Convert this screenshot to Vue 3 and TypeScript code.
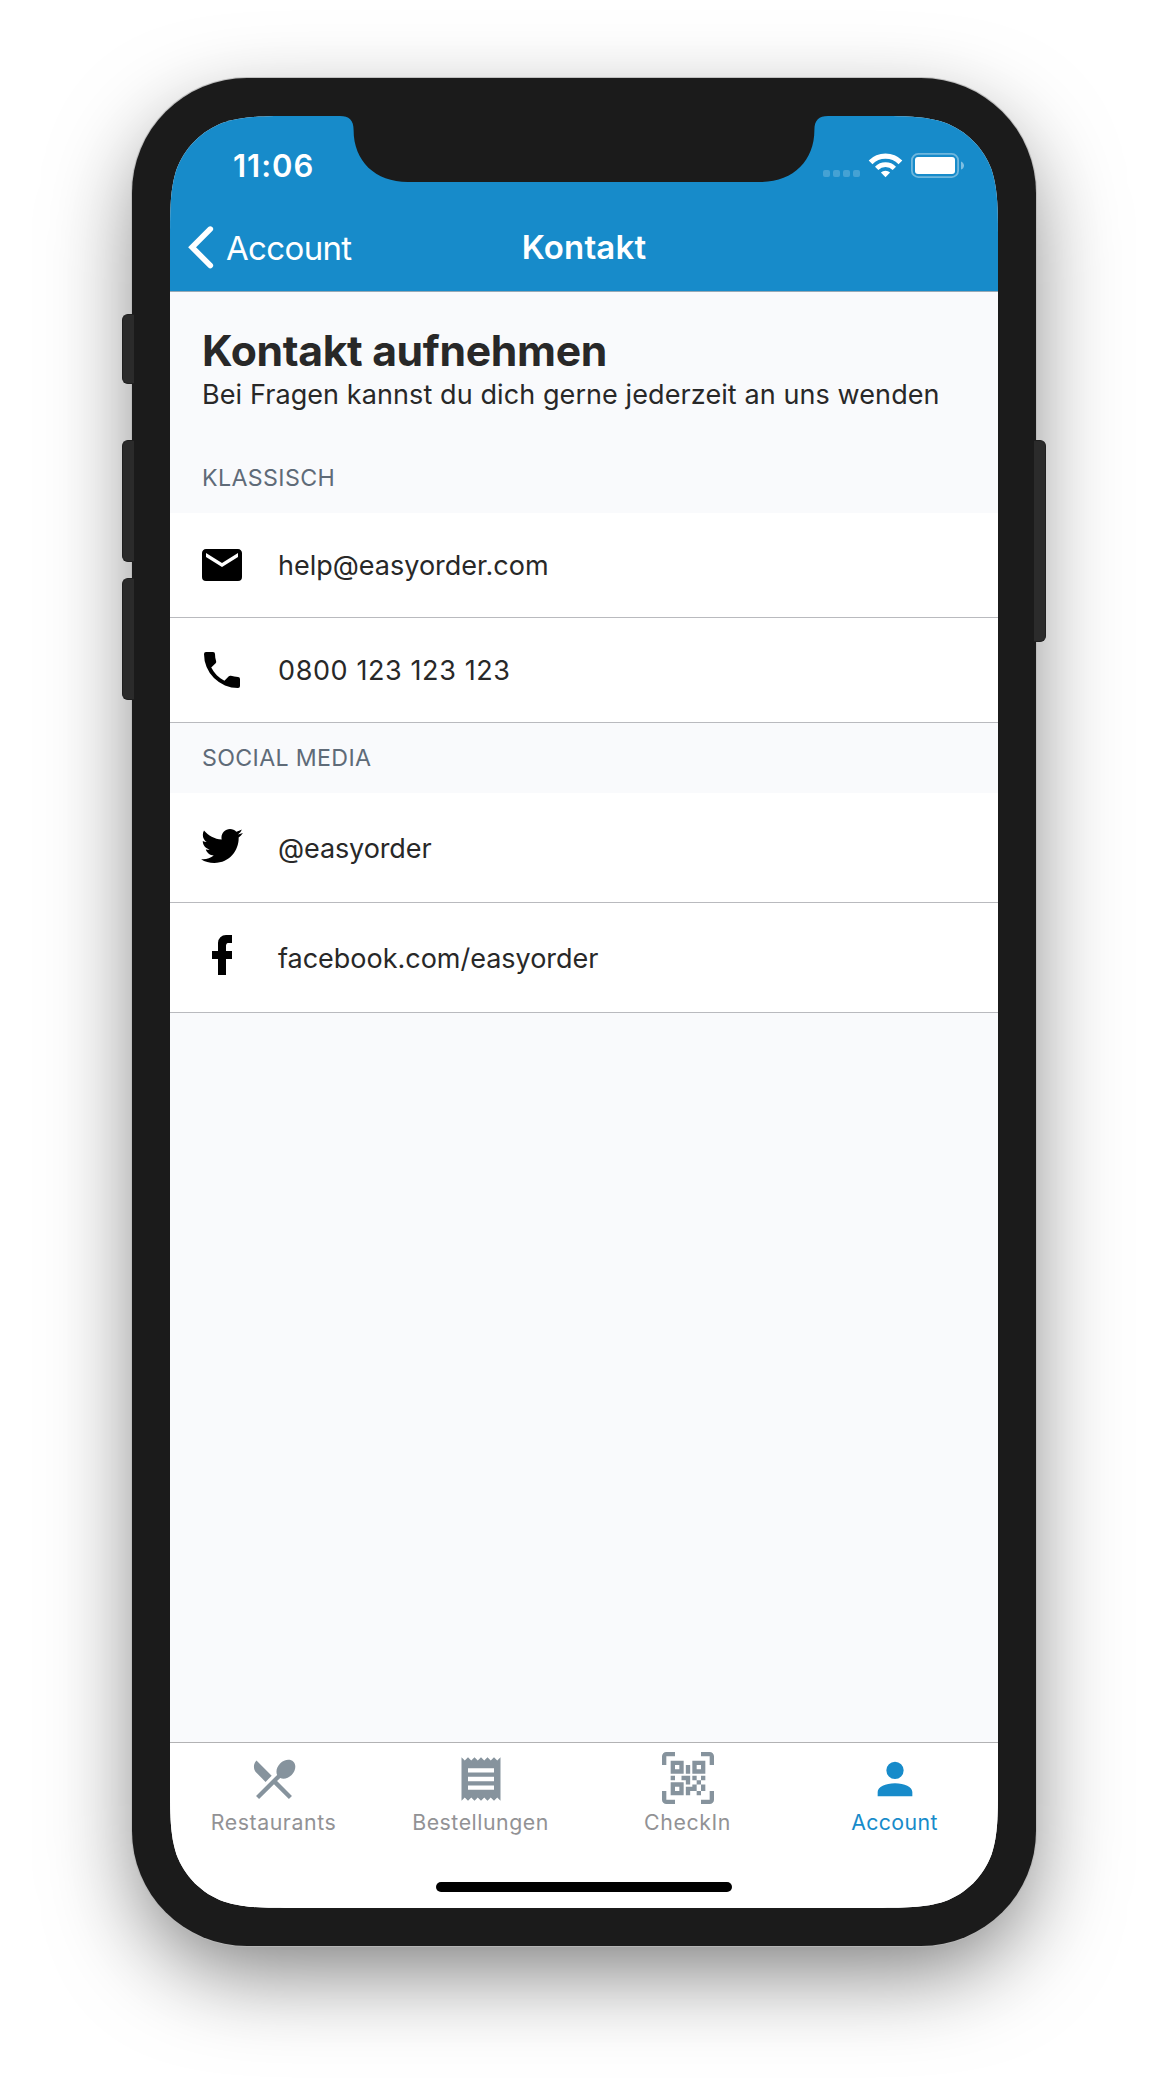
<script setup lang="ts">
interface ContactRow {
  text: string
  path: string
  spacing: string
}

interface ContactSection {
  title: string
  kind: 'classic' | 'social'
  spacing: string
  rows: ContactRow[]
}

interface Tab {
  label: string
  path: string
  spacing: string
  scan?: boolean
  active?: boolean
}

const sections: ContactSection[] = [
  {
    title: 'KLASSISCH',
    kind: 'classic',
    spacing: '0.38px',
    rows: [
      {
        text: 'help@easyorder.com',
        spacing: '0',
        path: 'M20,8L12,13L4,8V6L12,11L20,6M20,4H4C2.89,4 2,4.89 2,6V18A2,2 0 0,0 4,20H20A2,2 0 0,0 22,18V6C22,4.89 21.1,4 20,4Z',
      },
      {
        text: '0800 123 123 123',
        spacing: '0.6px',
        path: 'M6.62,10.79C8.06,13.62 10.38,15.94 13.21,17.38L15.41,15.18C15.69,14.9 16.08,14.82 16.43,14.93C17.55,15.3 18.75,15.5 20,15.5A1,1 0 0,1 21,16.5V20A1,1 0 0,1 20,21A17,17 0 0,1 3,4A1,1 0 0,1 4,3H7.5A1,1 0 0,1 8.5,4C8.5,5.25 8.7,6.45 9.07,7.57C9.18,7.92 9.1,8.31 8.82,8.59L6.62,10.79Z',
      },
    ],
  },
  {
    title: 'SOCIAL MEDIA',
    kind: 'social',
    spacing: '0.34px',
    rows: [
      {
        text: '@easyorder',
        spacing: '-0.1px',
        path: 'M22.46,6C21.69,6.35 20.86,6.58 20,6.69C20.88,6.16 21.56,5.32 21.88,4.31C21.05,4.81 20.13,5.16 19.16,5.36C18.37,4.5 17.26,4 16,4C13.65,4 11.73,5.92 11.73,8.29C11.73,8.63 11.77,8.96 11.84,9.27C8.28,9.09 5.11,7.38 3,4.79C2.63,5.42 2.42,6.16 2.42,6.94C2.42,8.43 3.17,9.75 4.33,10.5C3.62,10.5 2.96,10.3 2.38,10C2.38,10 2.38,10 2.38,10.03C2.38,12.11 3.86,13.85 5.82,14.24C5.46,14.34 5.08,14.39 4.69,14.39C4.42,14.39 4.15,14.36 3.89,14.31C4.43,16 6,17.26 7.89,17.29C6.43,18.45 4.58,19.13 2.56,19.13C2.22,19.13 1.88,19.11 1.54,19.07C3.44,20.29 5.7,21 8.12,21C16,21 20.33,14.46 20.33,8.79C20.33,8.6 20.33,8.42 20.32,8.23C21.16,7.63 21.88,6.87 22.46,6Z',
      },
      {
        text: 'facebook.com/easyorder',
        spacing: '-0.02px',
        path: 'M17,2V6H15C14.31,6 14,6.81 14,7.5V10H17V14H14V22H10V14H7V10H10V6A4,4 0 0,1 14,2H17Z',
      },
    ],
  },
]

const tabs: Tab[] = [
  {
    label: 'Restaurants',
    spacing: '0.58px',
    path: 'M8.1,13.34L3.91,9.16C2.35,7.59 2.35,5.06 3.91,3.5L10.93,10.5L8.1,13.34M14.88,11.53C16.41,12.24 18.55,11.74 20.14,10.16C22.04,8.25 22.41,5.5 20.95,4.03C19.49,2.57 16.73,2.94 14.82,4.84C13.24,6.42 12.74,8.57 13.45,10.1L3.7,19.86L5.11,21.27L12,14.39L18.88,21.27L20.29,19.86L13.41,12.97L14.88,11.53Z',
  },
  {
    label: 'Bestellungen',
    spacing: '0.52px',
    path: 'M3,22L4.5,20.5L6,22L7.5,20.5L9,22L10.5,20.5L12,22L13.5,20.5L15,22L16.5,20.5L18,22L19.5,20.5L21,22V2L19.5,3.5L18,2L16.5,3.5L15,2L13.5,3.5L12,2L10.5,3.5L9,2L7.5,3.5L6,2L4.5,3.5L3,2M18,9H6V7H18M18,13H6V11H18M18,17H6V15H18V17Z',
  },
  {
    label: 'CheckIn',
    spacing: '0.59px',
    scan: true,
    path: 'M4,4H10V10H4V4M20,4V10H14V4H20M14,15H16V13H14V11H16V13H18V11H20V13H18V15H20V18H18V20H16V18H13V20H11V16H14V15M16,15V18H18V15H16M4,20V14H10V20H4M6,6V8H8V6H6M16,6V8H18V6H16M6,16V18H8V16H6M4,11H6V13H4V11M9,11H13V15H11V13H9V11M11,6H13V10H11V6M2,2V6H0V2A2,2 0 0,1 2,0H6V2H2M22,0A2,2 0 0,1 24,2V6H22V2H18V0H22M2,18V22H6V24H2A2,2 0 0,1 0,22V18H2M22,22V18H24V22A2,2 0 0,1 22,24H18V22H22Z',
  },
  {
    label: 'Account',
    spacing: '0.4px',
    active: true,
    path: 'M12,4A4,4 0 0,1 16,8A4,4 0 0,1 12,12A4,4 0 0,1 8,8A4,4 0 0,1 12,4M12,14C16.42,14 20,15.79 20,18V20H4V18C4,15.79 7.58,14 12,14Z',
  },
]
</script>

<template>
  <div class="stage">
    <div class="phone">
      <span class="key key-mute"></span>
      <span class="key key-up"></span>
      <span class="key key-down"></span>
      <span class="key key-power"></span>

      <div class="screen">
        <svg class="notch" width="488" height="66" viewBox="0 0 488 66">
          <path d="M0 0C9 0 13.6 4 13.6 14C13.6 45 35 66 68 66H420C453 66 474.4 45 474.4 14C474.4 4 479 0 488 0Z" fill="#1b1b1b" />
        </svg>

        <header class="top">
          <div class="status">
            <span class="time">11:06</span>
            <svg class="indicators" width="142" height="25" viewBox="0 0 142 25">
              <g fill="#fff" fill-opacity="0.2">
                <rect x="0" y="17" width="7" height="7" rx="2" />
                <rect x="10" y="17" width="7" height="7" rx="2" />
                <rect x="20" y="17" width="7" height="7" rx="2" />
                <rect x="30" y="17" width="7" height="7" rx="2" />
              </g>
              <g fill="none" stroke="#fff">
                <path d="M47.58 9.28A21.1 21.1 0 0 1 77.42 9.28" stroke-width="5.3" />
                <path d="M53.66 15.36A12.5 12.5 0 0 1 71.34 15.36" stroke-width="4.7" />
              </g>
              <path d="M62.5 24.2L57.9 19.6A6.5 6.5 0 0 1 67.1 19.6Z" fill="#fff" />
              <rect x="88.9" y="0.9" width="46.2" height="23.2" rx="6.4" fill="none" stroke="#fff" stroke-opacity="0.38" stroke-width="1.8" />
              <rect x="92" y="4" width="40" height="17" rx="3" fill="#fff" />
              <path d="M138 8.4C142 10 142 15 138 16.6Z" fill="#fff" fill-opacity="0.45" />
            </svg>
          </div>
          <nav class="nav">
            <div class="back">
              <svg width="30" height="46" viewBox="0 0 30 46">
                <path d="M25.3 5.1L7.1 23.3L25.3 41.5" fill="none" stroke="#fff" stroke-width="5.6" stroke-linecap="round" />
              </svg>
              <span class="back-label">Account</span>
            </div>
            <span class="nav-title">Kontakt</span>
          </nav>
        </header>

        <main class="content">
          <div class="intro">
            <h1>Kontakt aufnehmen</h1>
            <p>Bei Fragen kannst du dich gerne jederzeit an uns wenden</p>
          </div>
          <section v-for="section in sections" :key="section.title" :class="section.kind">
            <h2 :style="{ letterSpacing: section.spacing }">{{ section.title }}</h2>
            <div v-for="row in section.rows" :key="row.text" class="row">
              <svg class="row-icon" width="48" height="48" viewBox="0 0 24 24"><path :d="row.path" /></svg>
              <span class="row-text" :style="{ letterSpacing: row.spacing }">{{ row.text }}</span>
            </div>
          </section>
        </main>

        <footer class="tabbar">
          <div class="tabs">
            <div v-for="tab in tabs" :key="tab.label" class="tab" :class="{ active: tab.active }">
              <svg class="tab-icon" :class="{ scan: tab.scan }" width="52" height="52" viewBox="0 0 24 24"><path :d="tab.path" /></svg>
              <span class="tab-label" :style="{ letterSpacing: tab.spacing }">{{ tab.label }}</span>
            </div>
          </div>
          <div class="home"></div>
        </footer>
      </div>
    </div>
  </div>
</template>

<style>
body {
  background: #fff;
}
</style>

<style scoped>
.stage {
  box-sizing: border-box;
  width: 1168px;
  height: 2096px;
  padding: 78px 132px 0;
  overflow: hidden;
  font-family: Inter, 'Liberation Sans', sans-serif;
  color: #282828;
}

.phone {
  position: relative;
  box-sizing: border-box;
  width: 904px;
  height: 1868px;
  padding: 38px;
  border-radius: 115px;
  background: #1b1b1b;
  box-shadow:
    0 0 0 1px rgba(185, 185, 185, 0.85),
    0 32px 92px -10px rgba(0, 0, 0, 0.54);
}

.key {
  position: absolute;
  box-sizing: border-box;
  left: -10px;
  width: 12px;
  border: 1px solid #1f1f1f;
  border-right: 0;
  border-radius: 6px 0 0 6px;
  background: #2b2b2b;
}

.key-mute {
  top: 236px;
  height: 70px;
}

.key-up {
  top: 362px;
  height: 122px;
}

.key-down {
  top: 500px;
  height: 122px;
}

.key-power {
  top: 362px;
  left: auto;
  right: -10px;
  height: 202px;
  border: 1px solid #1f1f1f;
  border-left: 0;
  border-radius: 0 6px 6px 0;
}

.screen {
  position: relative;
  display: flex;
  flex-direction: column;
  width: 828px;
  height: 1792px;
  background: #f9fafc;
  clip-path: path('M130 0H698C735.5 0 754.2 0 774.3 6.4C796.3 14.4 813.6 31.7 821.6 53.7C828 73.8 828 92.5 828 130V1662C828 1699.5 828 1718.2 821.6 1738.3C813.6 1760.3 796.3 1777.6 774.3 1785.6C754.2 1792 735.5 1792 698 1792H130C92.5 1792 73.8 1792 53.7 1785.6C31.7 1777.6 14.4 1760.3 6.4 1738.3C0 1718.2 0 1699.5 0 1662V130C0 92.5 0 73.8 6.4 53.7C14.4 31.7 31.7 14.4 53.7 6.4C73.8 0 92.5 0 130 0Z');
}

.notch {
  position: absolute;
  top: 0;
  left: 170px;
}

.top {
  box-sizing: border-box;
  height: 176px;
  border-bottom: 1px solid #97a9b5;
  background: #178bca;
  color: #fff;
}

.status {
  display: flex;
  justify-content: space-between;
  height: 88px;
  padding: 0 33px 0 63px;
}

.time {
  padding-top: 12px;
  font-size: 31px;
  font-weight: 600;
  line-height: 76px;
  letter-spacing: 1px;
}

.indicators {
  margin-top: 37px;
}

.nav {
  display: grid;
  grid-template-columns: 1fr auto 1fr;
  height: 87px;
}

.back {
  display: flex;
  padding-left: 15px;
}

.back svg {
  margin: 20px 11px 0 0;
}

.back-label {
  font-size: 33px;
  font-weight: 400;
  line-height: 88px;
  letter-spacing: -0.65px;
}

.nav-title {
  font-size: 33px;
  font-weight: 600;
  line-height: 86px;
  letter-spacing: 0.14px;
}

.content {
  flex: 1;
}

.intro {
  padding: 33px 32px 30px;
}

h1 {
  margin: 0;
  font-size: 42.7px;
  font-weight: 700;
  line-height: 52px;
  letter-spacing: -0.34px;
}

p {
  margin: 0;
  font-size: 27px;
  line-height: 36px;
  letter-spacing: 0.09px;
  white-space: nowrap;
}

h2 {
  margin: 0;
  padding: 0 32px;
  font-size: 23.2px;
  font-weight: 400;
  line-height: 70px;
  color: #5f6b78;
}

.row {
  display: flex;
  align-items: center;
  gap: 32px;
  height: 104px;
  padding: 0 28px;
  border-bottom: 1px solid #b9babe;
  background: #fff;
}

.social .row {
  height: 109px;
}

.row-icon {
  fill: #000;
}

.social .row-icon {
  margin-bottom: 5px;
}

.row-text {
  padding-top: 2px;
  font-size: 27px;
  line-height: 36px;
}

.tabbar {
  display: flex;
  flex-direction: column;
  align-items: center;
  justify-content: space-between;
  box-sizing: border-box;
  height: 166px;
  padding-bottom: 16px;
  border-top: 1px solid #b2b2b4;
  background: #fff;
}

.tabs {
  display: flex;
  align-self: stretch;
}

.tab {
  display: flex;
  flex: 1;
  flex-direction: column;
  align-items: center;
  gap: 4px;
  padding-top: 10px;
  color: #929295;
}

.tab-icon {
  fill: #86939d;
}

.tab-icon.scan {
  margin: -1.5px 0 1.5px;
}

.tab-label {
  font-size: 21.3px;
  line-height: 26px;
}

.tab.active {
  color: #178bca;
}

.tab.active .tab-icon {
  fill: #178bca;
}

.home {
  width: 296px;
  height: 10px;
  border-radius: 5px;
  background: #000;
}
</style>
